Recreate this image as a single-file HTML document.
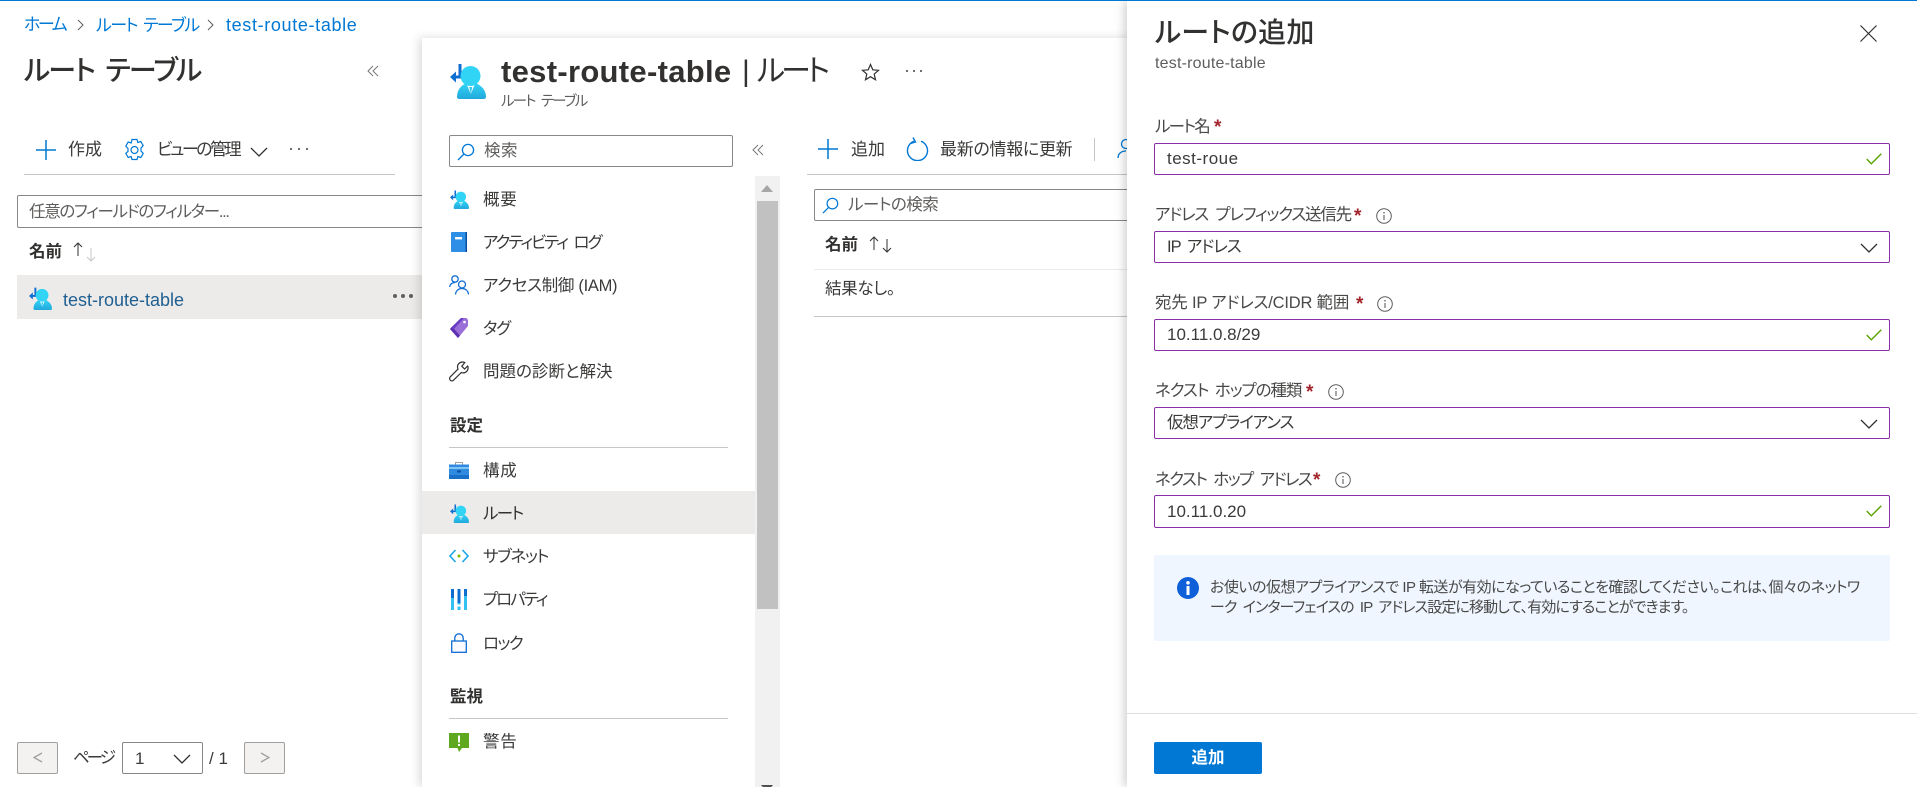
<!DOCTYPE html>
<html lang="ja"><head><meta charset="utf-8"><title>ルートの追加</title>
<style>
html,body{margin:0;padding:0;background:#fff;width:1917px;height:787px;overflow:hidden}
body{position:relative;font-family:"Liberation Sans","Noto Sans CJK JP",sans-serif;color:#3b3a39;font-size:16.5px;font-feature-settings:"palt"}
.t{position:absolute;white-space:nowrap;line-height:20px;height:20px}
.b{font-weight:700;color:#323130}
.a{position:absolute;display:block}
.abs{position:absolute;box-sizing:border-box}
.panel{position:absolute;background:#fff}
.field{position:absolute;box-sizing:border-box;left:1154px;width:736px;height:32px;border:1.25px solid #8b2fa8;border-radius:2px}
.lbl{color:#4a4948}
.req{color:#a4262c;font-weight:700;font-size:19px}
.box{position:absolute;box-sizing:border-box;border:1.25px solid #8a8886;border-radius:2px;background:#fff}
.ln{position:absolute;height:1px;background:#c8c6c4}
</style></head><body>
<svg width="0" height="0" style="position:absolute">
<defs>
<linearGradient id="pg" x1="0" y1="0" x2="0" y2="1"><stop offset="0" stop-color="#32d4f5"/><stop offset="1" stop-color="#22a8dc"/></linearGradient>
<symbol id="route" viewBox="0 0 36 36">
<path d="M10 1v13H5" fill="none" stroke="#0f6fd0" stroke-width="3"/>
<path d="M0 14l6-5.500v11z" fill="#0f6fd0"/>
<path d="M7 34c0-7 4-12 10-14h8c6 2 11 7 11 14 0 1-1 2-2 2H9c-1 0-2-1-2-2z" fill="url(#pg)"/>
<path d="M16.500 21h8.500l-4.200 10z" fill="#fff"/>
<path d="M19.300 24h3l-1.500 7z" fill="#32c8ee"/>
<circle cx="20.500" cy="13" r="10" fill="#32d4f5"/>
</symbol>
<symbol id="mag" viewBox="0 0 18 18"><circle cx="11" cy="7" r="5.6" fill="none" stroke="#0078d4" stroke-width="1.3"/><path d="M7 11L1 17" stroke="#0078d4" stroke-width="1.3"/></symbol>
<symbol id="plus" viewBox="0 0 20 20"><path d="M10 0v20M0 10h20" stroke="#0078d4" stroke-width="1.5"/></symbol>
<symbol id="chev" viewBox="0 0 18 10"><path d="M1 1l8 8 8-8" fill="none" stroke="#323130" stroke-width="1.3"/></symbol>
<symbol id="chk" viewBox="0 0 16 12"><path d="M0.7 6l4.600 4.800L15.300 .8" fill="none" stroke="#57a300" stroke-width="1.4"/></symbol>
<symbol id="dbl" viewBox="0 0 12 12"><path d="M6 1L1 6l5 5M11 1L6 6l5 5" fill="none" stroke="#7a7876" stroke-width="1"/></symbol>
<symbol id="inf" viewBox="0 0 16 16"><circle cx="8" cy="8" r="7.300" fill="none" stroke="#605e5c" stroke-width="1"/><path d="M8 7v5" stroke="#605e5c" stroke-width="1.100"/><circle cx="8" cy="4.800" r=".8" fill="#605e5c"/></symbol>
</defs></svg>

<div class="abs" style="left:0;top:0;width:1917px;height:1px;background:#0078d4;z-index:9"></div>

<!-- breadcrumb -->
<div class="t" style="left:24px;top:15px;font-size:17px;letter-spacing:-2.500px;color:#0078d4">ホーム</div>
<svg class="a" style="left:77px;top:19px" width="8" height="12"><path d="M1 1l5 5-5 5" fill="none" stroke="#605e5c"/></svg>
<div class="t" style="left:96px;top:16px;font-size:17px;letter-spacing:-1.600px;word-spacing:3px;color:#0078d4">ルート テーブル</div>
<svg class="a" style="left:207px;top:19px" width="8" height="12"><path d="M1 1l5 5-5 5" fill="none" stroke="#605e5c"/></svg>
<div class="t" style="left:226px;top:15px;font-size:18px;letter-spacing:.65px;color:#0078d4">test-route-table</div>

<!-- left blade -->
<div class="t b" style="left:24px;top:56px;height:30px;line-height:30px;font-size:28px;letter-spacing:-1.700px;word-spacing:5px;font-weight:500">ルート テーブル</div>
<svg class="a" style="left:367px;top:65px" width="12" height="12"><use href="#dbl"/></svg>
<svg class="a" style="left:36px;top:140px" width="20" height="20"><use href="#plus"/></svg>
<div class="t" style="left:68px;top:140px;font-size:17px">作成</div>
<svg class="a" style="left:124px;top:138px" width="21" height="24" viewBox="0 0 21 24"><path d="M8 1.500h5l.8 3 3-1 2.400 4.200-2.200 2.300v3l2.200 2.300-2.400 4.200-3-1-.8 3H8l-.8-3-3 1-2.400-4.200L4 13.500v-3L1.800 8.200 4.200 4l3 1z" fill="none" stroke="#0078d4" stroke-width="1.200"/><circle cx="10.500" cy="12" r="3.500" fill="none" stroke="#0078d4" stroke-width="1.200"/></svg>
<div class="t" style="left:157px;top:140px;font-size:17px;letter-spacing:-2.500px">ビューの管理</div>
<svg class="a" style="left:250px;top:147px" width="18" height="10"><use href="#chev"/></svg>
<svg class="a" style="left:288px;top:147px" width="22" height="4"><circle cx="3" cy="2" r="1.100" fill="#605e5c"/><circle cx="11" cy="2" r="1.100" fill="#605e5c"/><circle cx="19" cy="2" r="1.100" fill="#605e5c"/></svg>
<div class="ln" style="left:24px;top:174px;width:371px"></div>
<div class="box" style="left:17px;top:195px;width:420px;height:33px"></div>
<div class="t" style="left:29px;top:202px;font-size:16.500px;letter-spacing:-1.300px;color:#605e5c">任意のフィールドのフィルター...</div>
<div class="t b" style="left:29px;top:242px;font-size:16.500px">名前</div>
<svg class="a" style="left:73px;top:242px" width="24" height="20"><path d="M5 1v13M1 5l4-4 4 4" fill="none" stroke="#323130" stroke-width="1"/><path d="M18 6v13M14 15l4 4 4-4" fill="none" stroke="#c8c6c4" stroke-width="1"/></svg>
<div class="abs" style="left:17px;top:275px;width:420px;height:44px;background:#edebe9"></div>
<svg class="a" style="left:29px;top:287px" width="23" height="23"><use href="#route"/></svg>
<div class="t" style="left:63px;top:290px;font-size:18px;color:#1f5f92">test-route-table</div>
<svg class="a" style="left:392px;top:293px" width="24" height="6"><circle cx="3" cy="3" r="2" fill="#605e5c"/><circle cx="11" cy="3" r="2" fill="#605e5c"/><circle cx="19" cy="3" r="2" fill="#605e5c"/></svg>

<!-- pagination -->
<div class="abs" style="left:17px;top:742px;width:41px;height:32px;background:#f3f2f1;border:1.250px solid #a19f9d;border-radius:2px"></div>
<svg class="a" style="left:33px;top:751px" width="10" height="13"><path d="M9 2L1 6.500l8 4.500" fill="none" stroke="#a19f9d" stroke-width="1.300"/></svg>
<div class="t" style="left:73px;top:748px;font-size:16.500px;letter-spacing:-3px">ページ</div>
<div class="box" style="left:122px;top:742px;width:81px;height:32px"></div>
<div class="t" style="left:135px;top:749px;font-size:17px">1</div>
<svg class="a" style="left:173px;top:754px" width="18" height="10"><use href="#chev"/></svg>
<div class="t" style="left:209px;top:749px;font-size:17px">/ 1</div>
<div class="abs" style="left:244px;top:742px;width:41px;height:32px;background:#f3f2f1;border:1.250px solid #a19f9d;border-radius:2px"></div>
<svg class="a" style="left:260px;top:751px" width="10" height="13"><path d="M1 2l8 4.500-8 4.500" fill="none" stroke="#a19f9d" stroke-width="1.300"/></svg>

<!-- middle blade -->
<div class="panel" style="left:422px;top:38px;width:720px;height:749px;box-shadow:-3px 0 9px rgba(0,0,0,.14)"></div>
<svg class="a" style="left:450px;top:63px" width="36" height="36"><use href="#route"/></svg>
<div class="t b" style="left:501px;top:54px;height:36px;line-height:36px;font-size:31px;font-weight:600;letter-spacing:.3px">test-route-table</div>
<div class="t" style="left:742px;top:54px;height:36px;line-height:36px;font-size:30px;color:#323130">|</div>
<div class="t" style="left:757px;top:54px;height:36px;line-height:36px;font-size:30px;letter-spacing:-3.800px;color:#323130">ルート</div>
<div class="t" style="left:501px;top:92px;font-size:14.500px;letter-spacing:-1.800px;word-spacing:4px;color:#605e5c">ルート テーブル</div>
<svg class="a" style="left:861px;top:63px" width="19" height="19" viewBox="0 0 19 19"><path d="M9.500 1.500l2.300 5.300 5.700.5-4.300 3.800 1.300 5.600-5-3-5 3 1.300-5.600L1.500 7.300l5.700-.5z" fill="none" stroke="#323130" stroke-width="1.200"/></svg>
<svg class="a" style="left:904px;top:69px" width="20" height="4"><circle cx="3" cy="2" r="1.100" fill="#605e5c"/><circle cx="10" cy="2" r="1.100" fill="#605e5c"/><circle cx="17" cy="2" r="1.100" fill="#605e5c"/></svg>

<div class="box" style="left:449px;top:135px;width:284px;height:32px"></div>
<svg class="a" style="left:457px;top:143px" width="18" height="18"><use href="#mag"/></svg>
<div class="t" style="left:484px;top:141px;letter-spacing:.5px;color:#605e5c">検索</div>
<svg class="a" style="left:752px;top:144px" width="12" height="12"><use href="#dbl"/></svg>

<svg class="a" style="left:450px;top:190px" width="19" height="19"><use href="#route"/></svg>
<div class="t" style="left:483px;top:190px;letter-spacing:.8px">概要</div>
<svg class="a" style="left:451px;top:232px" width="16" height="20" viewBox="0 0 16 20"><rect width="16" height="20" rx="1" fill="#2f8fe6"/><rect x="14.500" width="1.500" height="20" fill="#0a4f9e"/><rect x="4" y="5" width="7" height="2.400" fill="#fff"/></svg>
<div class="t" style="left:483px;top:233px;letter-spacing:-2px;word-spacing:4px">アクティビティ ログ</div>
<svg class="a" style="left:449px;top:275px" width="20" height="20" viewBox="0 0 20 20" fill="none" stroke="#0f6cd5" stroke-width="1.300"><circle cx="6" cy="4" r="3.200"/><path d="M.6 12c.6-2.800 2.500-4.500 5.400-4.500"/><circle cx="13" cy="9.500" r="3.500"/><path d="M6.500 19.500c.3-3.800 3-6 6.500-6s6.200 2.200 6.500 6"/></svg>
<div class="t" style="left:483px;top:276px;letter-spacing:-.3px">アクセス制御 (IAM)</div>
<svg class="a" style="left:450px;top:318px" width="18" height="20" viewBox="0 0 18 20"><path d="M11 0h5.500l1.500 2v6L8 20 0 11z" fill="#9b6fd8"/><path d="M0 11l8 9 2-2.400L2 8.600z" fill="#5e2fb0"/><path d="M11 0L1.500 9.300l2 2.200L14 0z" fill="#6a3cc4"/><circle cx="14.500" cy="4" r="1.300" fill="#fff"/></svg>
<div class="t" style="left:483px;top:319px;letter-spacing:-1.200px">タグ</div>
<svg class="a" style="left:449px;top:361px" width="20" height="21" viewBox="0 0 20 21"><path d="M13.500 1c-2.800 0-5 2.200-5 5 0 .8.200 1.500.5 2.100L1.200 15.900c-.8.800-.8 2.400.1 3.300.9.900 2.300.9 3.100.1l7.900-7.800c.5.300 1.200.400 1.800.400 2.800 0 5-2.300 5-5 0-.7-.1-1.300-.4-1.900L15.600 8 12.800 5.200 15.800 1.500c-.7-.3-1.500-.5-2.300-.5z" fill="none" stroke="#323130" stroke-width="1.200"/></svg>
<div class="t" style="left:483px;top:362px">問題の診断と解決</div>

<div class="t b" style="left:450px;top:416px;font-size:16.500px">設定</div>
<div class="ln" style="left:449px;top:447px;width:279px"></div>
<svg class="a" style="left:449px;top:461px" width="20" height="18" viewBox="0 0 20 18"><path d="M6.500 4V1.500h7V4" fill="none" stroke="#a19f9d"/><rect y="3.500" width="20" height="14.500" fill="#2f8ae0"/><rect y="6" width="20" height="2" fill="#7fc4f5"/><rect y="14" width="20" height="4" fill="#1a6fc8"/><rect x="8" y="9.500" width="4" height="2" fill="#0a4f9e"/></svg>
<div class="t" style="left:483px;top:461px;letter-spacing:.8px">構成</div>
<div class="abs" style="left:422px;top:491px;width:333px;height:43px;background:#edebe9"></div>
<svg class="a" style="left:450px;top:504px" width="19" height="19"><use href="#route"/></svg>
<div class="t" style="left:483px;top:504px;letter-spacing:-1.600px;color:#323130">ルート</div>
<svg class="a" style="left:449px;top:549px" width="20" height="14" viewBox="0 0 20 14"><path d="M6.500 1L1 7l5.500 6" fill="none" stroke="#1aa7ec" stroke-width="1.600"/><path d="M13.500 1L19 7l-5.500 6" fill="none" stroke="#1aa7ec" stroke-width="1.600"/><circle cx="10" cy="7" r="1.500" fill="#7fba00"/></svg>
<div class="t" style="left:483px;top:547px;letter-spacing:-1.300px">サブネット</div>
<svg class="a" style="left:451px;top:589px" width="16" height="21" viewBox="0 0 16 21"><path d="M0 0h3v21H0zM6.500 0h3v21h-3zM13 0h3v21h-3z" fill="#32c1f0"/><path d="M0 0h3v9H0zM6.500 0h3v14h-3zM13 0h3v7h-3z" fill="#0f6fd0"/><rect x="6.500" y="15.500" width="3" height="2" fill="#fff"/></svg>
<div class="t" style="left:483px;top:590px;letter-spacing:-2px">プロパティ</div>
<svg class="a" style="left:451px;top:633px" width="16" height="20" viewBox="0 0 16 20" fill="none" stroke="#0f6cd5" stroke-width="1.300"><rect x=".7" y="8" width="14.600" height="11.300" fill="#fbfbff"/><path d="M3.800 8V5a4.200 4.200 0 018.400 0v3"/></svg>
<div class="t" style="left:483px;top:634px;letter-spacing:-1.600px">ロック</div>
<div class="t b" style="left:450px;top:687px;font-size:16.500px">監視</div>
<div class="ln" style="left:449px;top:718px;width:279px"></div>
<svg class="a" style="left:449px;top:733px" width="20" height="20" viewBox="0 0 20 20"><path d="M0 0h20v15h-7l-3 4-1.500-4H0z" fill="#5ea820"/><rect x="9" y="2.500" width="2" height="7" fill="#fff"/><rect x="9" y="11" width="2" height="2" fill="#fff"/></svg>
<div class="t" style="left:483px;top:732px;letter-spacing:.8px">警告</div>

<!-- scrollbar -->
<div class="abs" style="left:755px;top:176px;width:25px;height:611px;background:#f1f1f1"></div>
<div class="abs" style="left:757px;top:201px;width:21px;height:408px;background:#c1c1c1"></div>
<svg class="a" style="left:761px;top:185px" width="12" height="7"><path d="M6 0l6 7H0z" fill="#a6a6a6"/></svg>
<svg class="a" style="left:761px;top:785px" width="12" height="7"><path d="M6 7l6-7H0z" fill="#505050"/></svg>

<!-- route content -->
<svg class="a" style="left:818px;top:139px" width="20" height="20"><use href="#plus"/></svg>
<div class="t" style="left:851px;top:140px;font-size:17px">追加</div>
<svg class="a" style="left:906px;top:137px" width="23" height="24" viewBox="0 0 23 24"><path d="M8 4.200A10 10 0 1 0 15 4.200" fill="none" stroke="#0078d4" stroke-width="1.400"/><path d="M7 .5L9.500 5 4.500 6.500" fill="none" stroke="#0078d4" stroke-width="1.400"/></svg>
<div class="t" style="left:940px;top:140px;font-size:17px;letter-spacing:-.3px">最新の情報に更新</div>
<div class="abs" style="left:1094px;top:138px;width:1px;height:23px;background:#c8c6c4"></div>
<svg class="a" style="left:1117px;top:138px" width="12" height="22" viewBox="0 0 12 22" fill="none" stroke="#0078d4" stroke-width="1.300"><circle cx="9" cy="6" r="4.500"/><path d="M1 20c0-4 3-7 8-7"/></svg>
<div class="ln" style="left:807px;top:174px;width:320px"></div>
<div class="box" style="left:814px;top:189px;width:330px;height:32px"></div>
<svg class="a" style="left:822px;top:197px" width="17" height="17"><use href="#mag" width="17" height="17"/></svg>
<div class="t" style="left:848px;top:195px;letter-spacing:-.5px;color:#605e5c">ルートの検索</div>
<div class="t b" style="left:825px;top:235px;font-size:16.500px">名前</div>
<svg class="a" style="left:869px;top:236px" width="24" height="20"><path d="M5 1v13M1 5l4-4 4 4" fill="none" stroke="#323130" stroke-width="1"/><path d="M18 3v13M14 12l4 4 4-4" fill="none" stroke="#323130" stroke-width="1"/></svg>
<div class="ln" style="left:814px;top:269px;width:313px;background:#edebe9"></div>
<div class="t" style="left:825px;top:279px;letter-spacing:-.3px">結果なし。</div>
<div class="ln" style="left:814px;top:316px;width:313px"></div>

<!-- right blade -->
<div class="panel" style="left:1127px;top:1px;width:790px;height:786px;box-shadow:-3px 0 9px rgba(0,0,0,.18)"></div>
<div class="t b" style="left:1155px;top:16px;height:34px;line-height:34px;font-size:28px;letter-spacing:.2px;font-weight:500">ルートの追加</div>
<div class="t" style="left:1155px;top:54px;font-size:16px;letter-spacing:.2px;color:#605e5c">test-route-table</div>
<svg class="a" style="left:1860px;top:25px" width="17" height="17"><path d="M.5.500l16 16M16.500.500l-16 16" stroke="#323130" stroke-width="1.200"/></svg>

<div class="t lbl" style="left:1155px;top:117px;letter-spacing:-1.700px">ルート名</div><div class="t req" style="left:1214px;top:118px">*</div>
<div class="field" style="top:143px"></div>
<div class="t" style="left:1167px;top:149px;font-size:17px;letter-spacing:.5px">test-roue</div>
<svg class="a" style="left:1866px;top:153px" width="16" height="12"><use href="#chk"/></svg>

<div class="t lbl" style="left:1155px;top:205px;letter-spacing:-1.200px;word-spacing:4px">アドレス プレフィックス送信先</div><div class="t req" style="left:1354px;top:207px">*</div>
<svg class="a" style="left:1376px;top:208px" width="16" height="16"><use href="#inf"/></svg>
<div class="field" style="top:231px"></div>
<div class="t" style="left:1167px;top:237px;font-size:16.500px;letter-spacing:-1px;word-spacing:3px">IP アドレス</div>
<svg class="a" style="left:1860px;top:243px" width="18" height="10"><use href="#chev"/></svg>

<div class="t lbl" style="left:1155px;top:293px;letter-spacing:-.2px">宛先 IP アドレス/CIDR 範囲</div><div class="t req" style="left:1356px;top:295px">*</div>
<svg class="a" style="left:1377px;top:296px" width="16" height="16"><use href="#inf"/></svg>
<div class="field" style="top:319px"></div>
<div class="t" style="left:1167px;top:325px;font-size:17px">10.11.0.8/29</div>
<svg class="a" style="left:1866px;top:329px" width="16" height="12"><use href="#chk"/></svg>

<div class="t lbl" style="left:1155px;top:381px;letter-spacing:-1.100px;word-spacing:3px">ネクスト ホップの種類</div><div class="t req" style="left:1306px;top:383px">*</div>
<svg class="a" style="left:1328px;top:384px" width="16" height="16"><use href="#inf"/></svg>
<div class="field" style="top:407px"></div>
<div class="t" style="left:1167px;top:413px;font-size:16.500px;letter-spacing:-1.100px">仮想アプライアンス</div>
<svg class="a" style="left:1860px;top:419px" width="18" height="10"><use href="#chev"/></svg>

<div class="t lbl" style="left:1155px;top:470px;letter-spacing:-1.600px;word-spacing:4px">ネクスト ホップ アドレス</div><div class="t req" style="left:1313px;top:471px">*</div>
<svg class="a" style="left:1335px;top:472px" width="16" height="16"><use href="#inf"/></svg>
<div class="field" style="top:495px;height:33px"></div>
<div class="t" style="left:1167px;top:502px;font-size:17px">10.11.0.20</div>
<svg class="a" style="left:1866px;top:505px" width="16" height="12"><use href="#chk"/></svg>

<div class="abs" style="left:1154px;top:555px;width:736px;height:86px;background:#eff6ff;border-radius:2px"></div>
<svg class="a" style="left:1177px;top:577px" width="22" height="22" viewBox="0 0 22 22"><circle cx="11" cy="11" r="11" fill="#0f5fd8"/><rect x="9.500" y="9" width="3" height="9" fill="#fff"/><circle cx="11" cy="5.800" r="1.800" fill="#fff"/></svg>
<div class="t" style="left:1210px;top:578px;font-size:15px;letter-spacing:-.5px;color:#4a4948">お使いの仮想アプライアンスで IP 転送が有効になっていることを確認してください。これは、個々のネットワ</div>
<div class="t" style="left:1210px;top:598px;font-size:15px;letter-spacing:-.9px;word-spacing:3px;color:#4a4948">ーク インターフェイスの IP アドレス設定に移動して、有効にすることができます。</div>

<div class="abs" style="left:1127px;top:713px;width:790px;height:1px;background:#e1dfdd"></div>
<div class="abs" style="left:1154px;top:742px;width:108px;height:32px;background:#0078d4;border-radius:2px"></div>
<div class="t" style="left:1154px;top:748px;width:108px;text-align:center;color:#fff;font-weight:700;font-size:16.500px">追加</div>
</body></html>
